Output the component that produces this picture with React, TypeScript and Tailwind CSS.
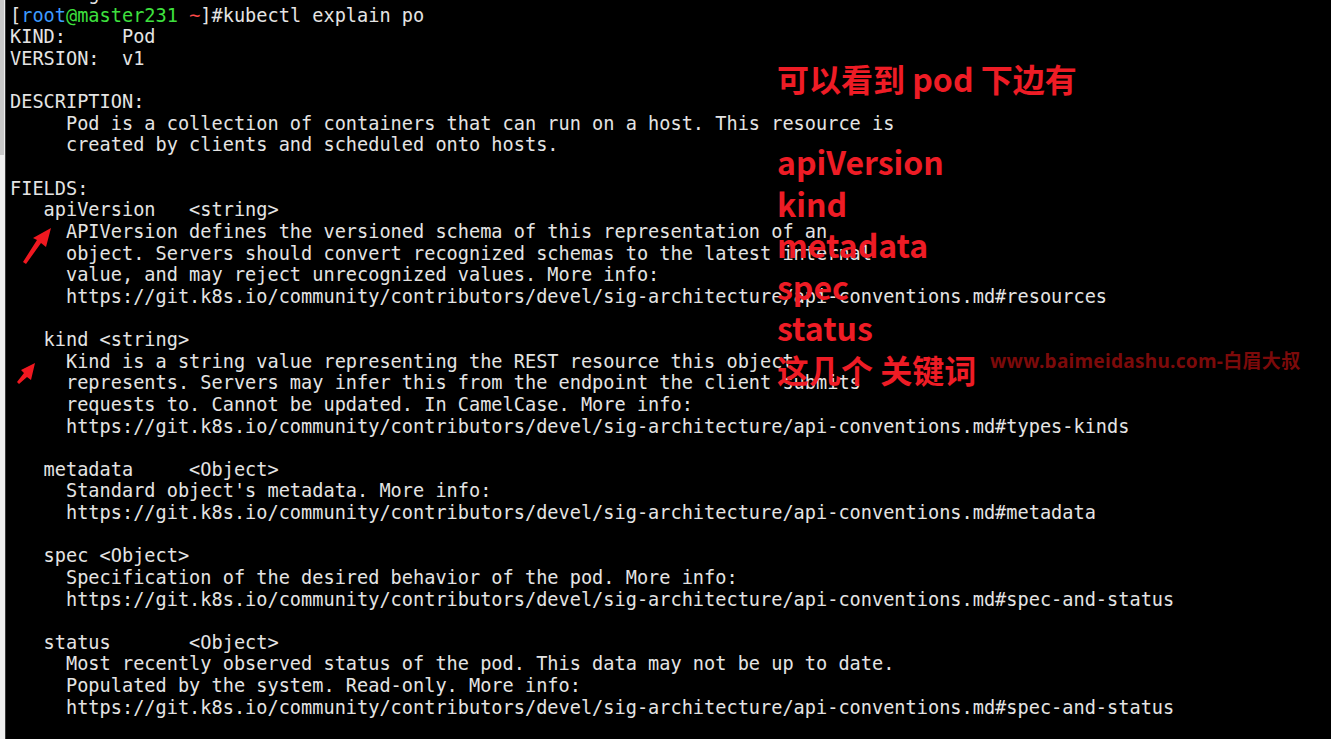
const lines: string[] = [
  'Last login: Thu Jun 19 10:42:15 2025 from 10.0.0.1',
  '__PROMPT__',
  'KIND:     Pod',
  'VERSION:  v1',
  '',
  'DESCRIPTION:',
  '     Pod is a collection of containers that can run on a host. This resource is',
  '     created by clients and scheduled onto hosts.',
  '',
  'FIELDS:',
  '   apiVersion   <string>',
  '     APIVersion defines the versioned schema of this representation of an',
  '     object. Servers should convert recognized schemas to the latest internal',
  '     value, and may reject unrecognized values. More info:',
  '     https://git.k8s.io/community/contributors/devel/sig-architecture/api-conventions.md#resources',
  '',
  '   kind <string>',
  '     Kind is a string value representing the REST resource this object',
  '     represents. Servers may infer this from the endpoint the client submits',
  '     requests to. Cannot be updated. In CamelCase. More info:',
  '     https://git.k8s.io/community/contributors/devel/sig-architecture/api-conventions.md#types-kinds',
  '',
  '   metadata     <Object>',
  "     Standard object's metadata. More info:",
  '     https://git.k8s.io/community/contributors/devel/sig-architecture/api-conventions.md#metadata',
  '',
  '   spec <Object>',
  '     Specification of the desired behavior of the pod. More info:',
  '     https://git.k8s.io/community/contributors/devel/sig-architecture/api-conventions.md#spec-and-status',
  '',
  '   status       <Object>',
  '     Most recently observed status of the pod. This data may not be up to date.',
  '     Populated by the system. Read-only. More info:',
  '     https://git.k8s.io/community/contributors/devel/sig-architecture/api-conventions.md#spec-and-status',
];

const notes = ['可以看到 pod 下边有', '', 'apiVersion', 'kind', 'metadata', 'spec', 'status', '这几个 关键词'];

function Prompt() {
  return (
    <>
      <span>[</span>
      <span className="text-[#3d9bff]">root</span>
      <span className="text-[#3ee03e]">@master231</span>
      <span> </span>
      <span className="text-[#ff4a4a]">~</span>
      <span>]#kubectl explain po</span>
    </>
  );
}

export default function App() {
  return (
    <div className="flex h-[739px] w-[1331px] overflow-hidden bg-black">
      {/* window edge */}
      <div className="flex w-[5px] shrink-0 flex-col bg-[#efefef]">
        <div className="h-[155px] w-[4px] bg-[#c8c8c8]" />
      </div>
      <div className="w-px shrink-0 bg-[#3a3a3a]" />

      <div className="relative flex-1 overflow-hidden">
        <div className="mt-[-17px] pl-[4px] font-['DejaVu_Sans_Mono',monospace] text-[18.6px] leading-[21.625px] text-[#e4e4e4] whitespace-pre">
          {lines.map((line, i) => (
            <div key={i} className="h-[21.625px]">
              {line === '__PROMPT__' ? <Prompt /> : line}
            </div>
          ))}
        </div>

        {/* red notes over the output */}
        <div className="absolute left-[771px] top-[58px] font-['Noto_Sans_CJK_SC','Noto_Sans',sans-serif] text-[32px] font-bold leading-[41.5px] text-[#ee1c25] whitespace-pre">
          {notes.map((n, i) => (
            <div key={i} className="h-[41.5px]">
              {n}
            </div>
          ))}
        </div>

        <div className="absolute left-[984px] top-[349px] font-['Noto_Sans','Noto_Sans_CJK_SC',sans-serif] text-[19px] font-bold leading-[24px] tracking-[0.3px] text-[#7c0a0a] whitespace-pre">
          www.baimeidashu.com-白眉大叔
        </div>

        <svg className="absolute left-0 top-0" width="60" height="400" viewBox="6 0 60 400">
          <polygon fill="#f01820" points="51,228 46,247 41,243 26,264 23,262 37,240 33,238" />
          <polygon fill="#f01820" points="35,363 31,380 27,377 19,384 17,382 24,373 21,370" />
        </svg>
      </div>
    </div>
  );
}
